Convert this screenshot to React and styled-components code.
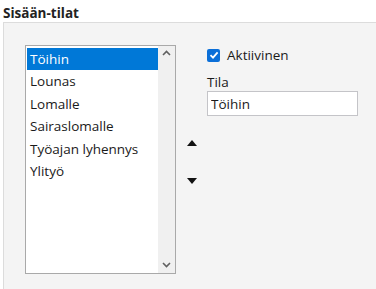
import React, { useState } from 'react';
import styled, { createGlobalStyle } from 'styled-components';

const GlobalStyle = createGlobalStyle`
	body {
		margin: 0;
		background: #ffffff;
		font-family: 'Open Sans', 'Liberation Sans', sans-serif;
		color: #1a1a1a;
	}
`;

const Page = styled.div`
	width: 376px;
	height: 289px;
	overflow: hidden;
`;

const Title = styled.h2`
	margin: 0;
	padding: 4px 0 0 3px;
	height: 18px;
	font-size: 13.5px;
	font-weight: 700;
	line-height: 18px;
	color: #222;
`;

const Panel = styled.section`
	margin: 0 0 0 3px;
	border-top: 1px solid #dcdcdc;
	border-left: 1px solid #dcdcdc;
	background: #f4f4f4;
	padding: 22px 0 30px 21px;
	display: flex;
	align-items: flex-start;
`;

const ListBox = styled.div`
	width: 149px;
	height: 227px;
	border: 1px solid #a9a9a9;
	background: #fff;
	display: flex;
	box-sizing: content-box;
`;

const Items = styled.ul`
	list-style: none;
	margin: 0;
	padding: 2px 0 0 1px;
	flex: 1;
`;

const Item = styled.li`
	height: 22.4px;
	line-height: 22.4px;
	padding-left: 3px;
	font-size: 13.5px;
	cursor: default;
	background: ${ ( { selected } ) => selected ? '#0078d7' : 'transparent' };
	color: ${ ( { selected } ) => selected ? '#fff' : '#1a1a1a' };
`;

const ScrollBar = styled.div`
	width: 17px;
	background: #f0f0f0;
	display: flex;
	flex-direction: column;
	justify-content: space-between;
	align-items: center;
	padding: 4px 0 5px;
`;

const Chevron = ( { down } ) => (
	<svg width="9" height="6" viewBox="0 0 9 6">
		<path
			d={ down ? 'M1 1 L4.5 4.5 L8 1' : 'M1 5 L4.5 1.5 L8 5' }
			fill="none"
			stroke="#606060"
			strokeWidth="1.6"
		/>
	</svg>
);

const MoveColumn = styled.div`
	display: flex;
	flex-direction: column;
	gap: 28px;
	margin: 93px 10px 0 11px;
`;

const MoveButton = styled.button`
	border: none;
	background: transparent;
	padding: 0;
	width: 10px;
	height: 10px;
	display: flex;
	align-items: center;
	justify-content: center;
	cursor: pointer;
`;

const Triangle = ( { down } ) => (
	<svg width="10" height="6" viewBox="0 0 10 6">
		<path d={ down ? 'M0 0 H10 L5 6 Z' : 'M0 6 H10 L5 0 Z' } fill="#111" />
	</svg>
);

const Details = styled.div`
	display: flex;
	flex-direction: column;
	padding-top: 3px;
	width: 151px;
`;

const CheckRow = styled.label`
	display: flex;
	align-items: center;
	gap: 7px;
	height: 14px;
	font-size: 13.5px;
`;

const CheckBox = styled.span`
	width: 13px;
	height: 13px;
	border-radius: 2px;
	background: #0b6fd8;
	display: flex;
	align-items: center;
	justify-content: center;
`;

const FieldLabel = styled.div`
	margin-top: 12px;
	font-size: 13.5px;
	line-height: 16px;
`;

const TextInput = styled.input`
	margin-top: 1px;
	box-sizing: border-box;
	width: 151px;
	height: 25px;
	border: 1px solid #c4c4c8;
	background: #fff;
	padding: 0 3px;
	font-family: inherit;
	font-size: 13.5px;
	color: #1a1a1a;
	outline: none;
`;

const STATES = [ 'Töihin', 'Lounas', 'Lomalle', 'Sairaslomalle', 'Työajan lyhennys', 'Ylityö' ];

export default function App() {
	const [ selected, setSelected ] = useState( 0 );

	return (
		<Page>
			<GlobalStyle />
			<Title>Sisään-tilat</Title>
			<Panel>
				<ListBox>
					<Items>
						{ STATES.map( ( s, i ) => (
							<Item key={ s } selected={ i === selected } onClick={ () => setSelected( i ) }>
								{ s }
							</Item>
						) ) }
					</Items>
					<ScrollBar>
						<Chevron />
						<Chevron down />
					</ScrollBar>
				</ListBox>
				<MoveColumn>
					<MoveButton aria-label="Ylös"><Triangle /></MoveButton>
					<MoveButton aria-label="Alas"><Triangle down /></MoveButton>
				</MoveColumn>
				<Details>
					<CheckRow>
						<CheckBox>
							<svg width="10" height="10" viewBox="0 0 10 10">
								<path d="M1.5 5.2 L4 7.6 L8.6 2.4" fill="none" stroke="#fff" strokeWidth="1.8" />
							</svg>
						</CheckBox>
						Aktiivinen
					</CheckRow>
					<FieldLabel>Tila</FieldLabel>
					<TextInput defaultValue={ STATES[ selected ] } key={ selected } />
				</Details>
			</Panel>
		</Page>
	);
}
